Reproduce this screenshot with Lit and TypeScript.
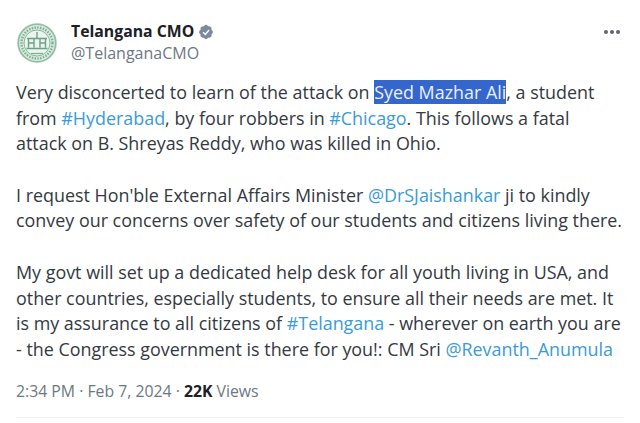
import { LitElement, html, css } from "lit";
import { customElement } from "lit/decorators.js";

@customElement("app-root")
export class AppRoot extends LitElement {
  static styles = css`
    :host { display: block; width: 640px; height: 423px; overflow: hidden; background: #fff; color: #33393f; font-family: "Open Sans", "Noto Sans", sans-serif; }
    .page { display: flex; flex-direction: column; padding: 21px 16px 0; height: 423px; box-sizing: border-box; }
    .head { display: flex; align-items: flex-start; height: 59px; }
    .avatar { width: 40px; height: 40px; margin: 2px 0 0 1px; flex: none; }
    .who { display: flex; flex-direction: column; margin-left: 14px; }
    .name { display: flex; align-items: center; gap: 4px; font-size: 15.8px; line-height: 21px; font-weight: 700; color: #1b2126; }
    .handle { font-size: 16px; line-height: 21px; margin-top: 1px; color: #6c7883; }
    .more { margin-left: auto; margin-right: 4px; margin-top: 9px; display: flex; gap: 2px; }
    .more i { width: 4px; height: 4px; border-radius: 50%; background: #5d666e; display: block; }
    .body { font-size: 17.9px; line-height: 25.7px; }
    .line { height: 25.7px; white-space: nowrap; }
    .link { color: #3a9bd6; }
    .sel { background: #3566cc; color: #eaf1fb; }
    .meta { margin-top: 17px; font-size: 15.8px; line-height: 22px; color: #6c7883; }
    .meta b { color: #1b2126; font-weight: 700; }
    .rule { margin-top: 15px; height: 1px; background: #eff2f4; }
  `;
  render() {
    return html`<div class="page">
      <div class="head">
        <svg class="avatar" viewBox="0 0 40 40">
          <circle cx="20" cy="20" r="20" fill="#dbe9df"/>
          <circle cx="20" cy="20" r="18.7" fill="none" stroke="#8fbda2" stroke-width="1.6"/>
          <circle cx="20" cy="20" r="15.500" fill="none" stroke="#7fb295" stroke-width="2.400" stroke-dasharray="1.500 1.300"/>
          <circle cx="20" cy="20" r="13" fill="#edf4ef" stroke="#8bb89d" stroke-width="1"/>
          <path d="M10 15.500h20M11.500 15.500v9M28.500 15.500v9M17 15.500v9M23 15.500v9M9.500 25.500h21M12 20h5M23 20h5M20 9v6.500" fill="none" stroke="#6aa383" stroke-width="1.400"/>
          <path d="M14 30.500h12" stroke="#7fb295" stroke-width="1.300"/>
        </svg>
        <div class="who">
          <div class="name"><span>Telangana CMO</span>
            <svg width="16" height="16" viewBox="0 0 22 22"><path fill="#7b8b9b" d="M20.4 11c0-1.4-.8-2.6-2-3.2.5-1.300.2-2.800-.8-3.800s-2.500-1.300-3.800-.8C13.200 2 12 1.200 11 1.200S8.800 2 8.200 3.200c-1.300-.5-2.800-.2-3.800.8s-1.300 2.500-.8 3.800C2.400 8.400 1.600 9.600 1.600 11s.8 2.600 2 3.200c-.5 1.300-.2 2.800.8 3.800s2.500 1.300 3.800.8c.6 1.200 1.800 2 2.800 2s2.200-.8 2.800-2c1.300.5 2.800.2 3.800-.8s1.300-2.500.8-3.800c1.200-.6 2-1.800 2-3.200z"/><path d="M7 11.300l3 3 5.200-6" fill="none" stroke="#fff" stroke-width="2"/></svg>
          </div>
          <div class="handle">@TelanganaCMO</div>
        </div>
        <div class="more"><i></i><i></i><i></i></div>
      </div>
      <div class="body">
        <div class="line">Very disconcerted to learn of the attack on <span class="sel">Syed Mazhar Ali</span>, a student</div>
        <div class="line">from <span class="link">#Hyderabad</span>, by four robbers in <span class="link">#Chicago</span>. This follows a fatal</div>
        <div class="line">attack on B. Shreyas Reddy, who was killed in Ohio.</div>
        <div class="line"></div>
        <div class="line">I request Hon'ble External Affairs Minister <span class="link">@DrSJaishankar</span> ji to kindly</div>
        <div class="line">convey our concerns over safety of our students and citizens living there.</div>
        <div class="line"></div>
        <div class="line">My govt will set up a dedicated help desk for all youth living in USA, and</div>
        <div class="line">other countries, especially students, to ensure all their needs are met. It</div>
        <div class="line">is my assurance to all citizens of <span class="link">#Telangana</span> - wherever on earth you are</div>
        <div class="line">- the Congress government is there for you!: CM Sri <span class="link">@Revanth_Anumula</span></div>
      </div>
      <div class="meta">2:34 PM · Feb 7, 2024 · <b>22K</b> Views</div>
      <div class="rule"></div>
    </div>`;
  }
}
